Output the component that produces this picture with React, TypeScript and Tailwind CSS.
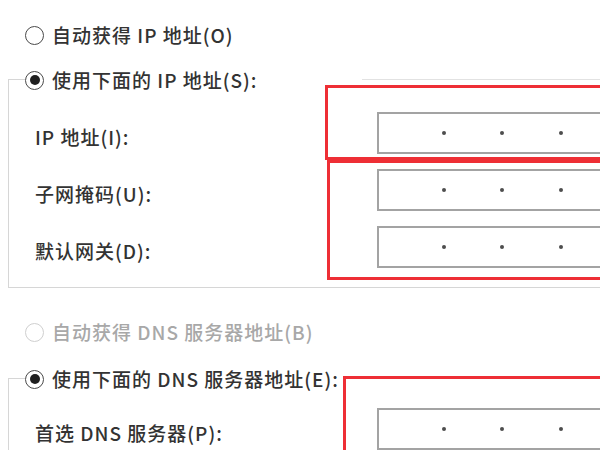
const Radio = ({ checked = false, disabled = false }: { checked?: boolean; disabled?: boolean }) => (
  <span
    className={`flex h-[19px] w-[19px] shrink-0 items-center justify-center rounded-full border-[1.5px] bg-white ${
      disabled ? 'border-[#cfcfcf]' : 'border-[#4a4a4a]'
    }`}
  >
    {checked && <span className="h-[10px] w-[10px] rounded-full bg-[#1f1f1f]" />}
  </span>
)

const IpBox = () => (
  <div className="relative h-[42px] w-[300px] shrink-0 border-2 border-[#a3a3a3] bg-white">
    {[63, 121, 180].map((x) => (
      <span
        key={x}
        className="absolute top-1/2 h-[4px] w-[4px] -translate-y-1/2 rounded-full bg-[#4d4d4d]"
        style={{ left: x }}
      />
    ))}
  </div>
)

const Field = ({ label }: { label: string }) => (
  <div className="flex items-center">
    <span className="mt-[8px] w-[342px] shrink-0">{label}</span>
    <IpBox />
  </div>
)

const GroupHeader = ({ label, lineGap }: { label: string; lineGap: number }) => (
  <div className="flex h-[26px] items-center">
    <div className="h-[14px] w-[17px] self-end border-l border-t border-[#d6d6d6]" />
    <Radio checked />
    <span className="ml-[8px]">{label}</span>
    <div className="h-[14px] flex-1 self-end border-t border-[#e2e2e2]" style={{ marginLeft: lineGap }} />
  </div>
)

export default function App() {
  return (
    <div className="relative h-[450px] w-[600px] overflow-hidden bg-white pt-[22px] font-['Noto_Sans_CJK_SC',sans-serif] text-[19px] font-medium leading-[26px] tracking-[1px] text-[#333]">
      <div className="flex h-[26px] items-center pl-[25px]">
        <Radio />
        <span className="ml-[8px]">自动获得 IP 地址(O)</span>
      </div>

      <div className="ml-[8px] mt-[19px] w-[700px]">
        <GroupHeader label="使用下面的 IP 地址(S):" lineGap={105} />
        <div className="flex flex-col gap-[15px] border-x border-b border-[#d6d6d6] pb-[19px] pl-[26px] pt-[19px]">
          <Field label="IP 地址(I):" />
          <Field label="子网掩码(U):" />
          <Field label="默认网关(D):" />
        </div>
      </div>

      <div className="mt-[31px] flex h-[26px] items-center pl-[25px] text-[#a8a8a8]">
        <Radio disabled />
        <span className="ml-[8px]">自动获得 DNS 服务器地址(B)</span>
      </div>

      <div className="ml-[8px] mt-[21px] w-[700px]">
        <GroupHeader label="使用下面的 DNS 服务器地址(E):" lineGap={20} />
        <div className="flex flex-col border-x border-[#d6d6d6] pl-[26px] pt-[16px]">
          <Field label="首选 DNS 服务器(P):" />
        </div>
      </div>

      <div className="absolute left-[325px] top-[85px] h-[75px] w-[300px] border-[3px] border-[#ee2f35]" />
      <div className="absolute left-[327px] top-[160px] h-[120px] w-[300px] border-[3px] border-[#ee2f35]" />
      <div className="absolute left-[343px] top-[376px] h-[120px] w-[300px] border-[3px] border-[#ee2f35]" />
    </div>
  )
}
